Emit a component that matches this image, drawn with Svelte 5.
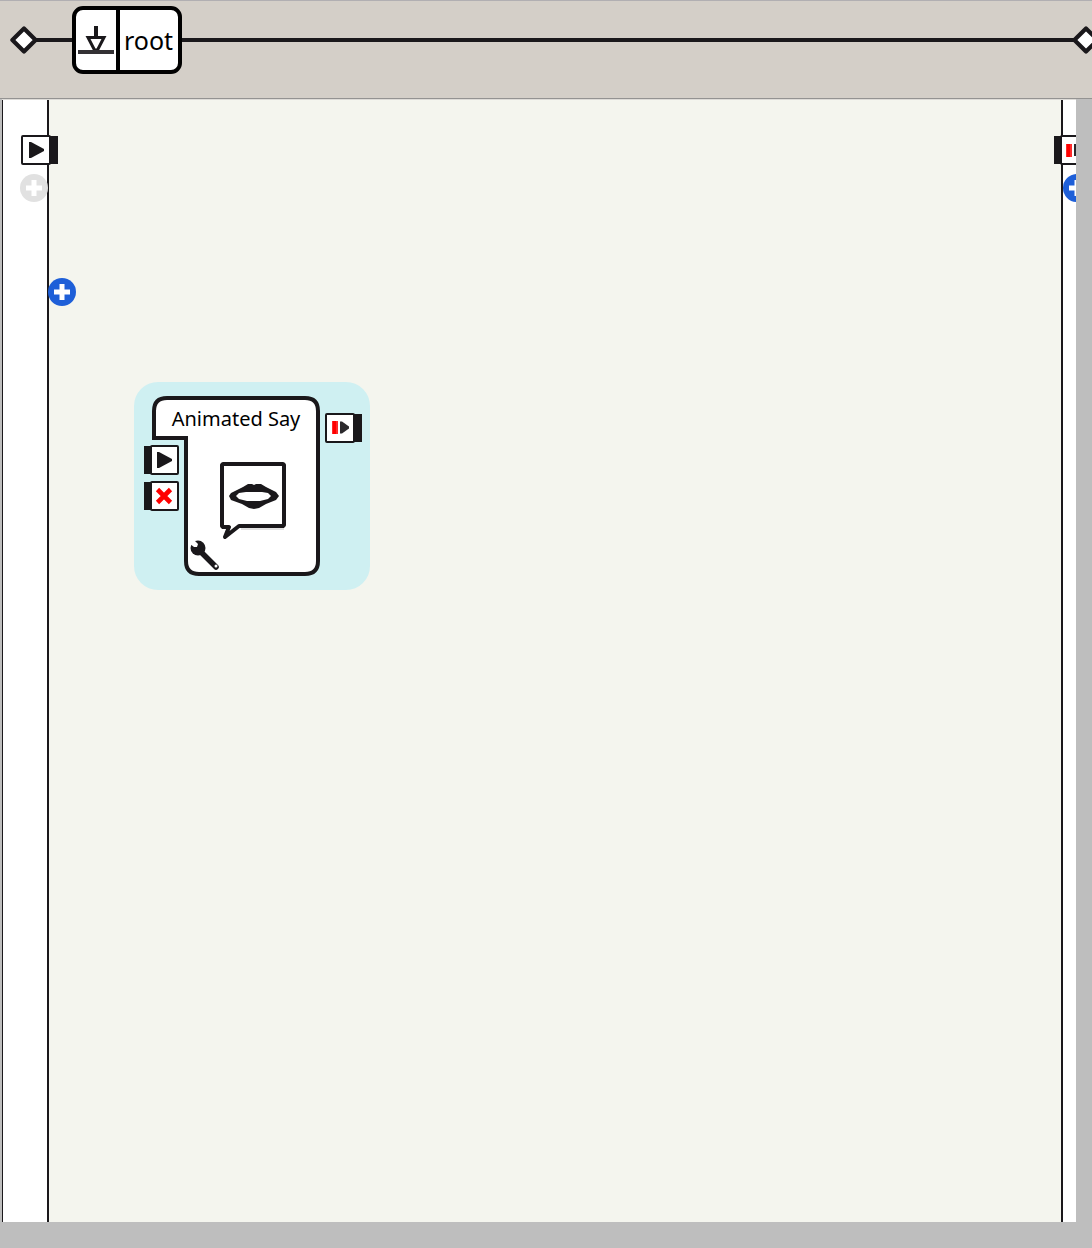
<script lang="ts">
  // Flow diagram editor: breadcrumb path on top, box canvas below.

  let path = $state(['root']);
  let nodes = $state([{ name: 'Animated Say', x: 85, y: 282 }]);
</script>

{#snippet diamond()}
  <svg class="diamond" width="28" height="28" viewBox="0 0 28 28" aria-hidden="true">
    <path d="M14 2.4 25.6 14 14 25.6 2.4 14z" fill="#fff" stroke="#1a181b" stroke-width="4.2" stroke-linejoin="round" />
  </svg>
{/snippet}

{#snippet port(kind: string, side: string, label: string)}
  <button type="button" class="port" aria-label={label}>
    {#if side === 'right'}
      <svg width="37" height="30" viewBox="0 0 37 30" aria-hidden="true">
        <rect x="1" y="1" width="28" height="28" rx="1" fill="#fff" stroke="#1a181b" stroke-width="2" />
        <rect x="28" y="1" width="9" height="28" fill="#1a181b" />
        {#if kind === 'play'}
          <path d="M8 7h2l13 7v2L10 23H8z" fill="#1a181b" />
        {:else}
          <path d="M7 8h6v13H7z" fill="#ff2a2a" />
          <path d="M9.5 8v13" stroke="#f00" stroke-width="3" />
          <path d="M15 8.500h2l7 5v2l-7 5h-2z" fill="#2b292c" />
        {/if}
      </svg>
    {:else}
      <svg width="35" height="30" viewBox="0 0 35 30" aria-hidden="true">
        <rect x="7" y="1" width="27" height="28" rx="1" fill="#fff" stroke="#1a181b" stroke-width="2" />
        <rect x="0" y="1" width="8" height="28" fill="#1a181b" />
        {#if kind === 'play'}
          <path d="M13 7h2l13 7v2l-13 7h-2z" fill="#1a181b" />
        {:else if kind === 'stop'}
          <path d="m13.5 8.5 13 13m0-13-13 13" stroke="#f00" stroke-width="4.6" />
        {:else}
          <path d="M12 9h6v13h-6z" fill="#ff2a2a" />
          <path d="M14.5 9v13" stroke="#f00" stroke-width="3" />
          <path d="M20 9h2l7 5v2l-7 5h-2z" fill="#2b292c" />
        {/if}
      </svg>
    {/if}
  </button>
{/snippet}

{#snippet plus(label: string, disabled: boolean)}
  <button type="button" class="plus" {disabled} aria-label={label}>
    <svg width="28" height="28" viewBox="0 0 28 28" aria-hidden="true">
      <circle cx="14" cy="14" r="14" fill="currentColor" />
      <path d="M14 6v16M6 14h16" stroke="#fff" stroke-width="5" />
    </svg>
  </button>
{/snippet}

<div class="editor">
  <nav class="path" aria-label="Box path">
    {@render diamond()}
    {#each path as step}
      <span class="wire short"></span>
      <button type="button" class="step">
        <span class="step-icon">
          <svg width="40" height="60" viewBox="0 0 40 60" aria-hidden="true">
            <path d="M20 16v10" stroke="#1a181b" stroke-width="4" />
            <path d="M12 27.5h16L21.5 40h-3z" fill="#fff" stroke="#1a181b" stroke-width="3" />
            <path d="M2 42h36" stroke="#333134" stroke-width="4" />
          </svg>
        </span>
        <span class="step-name">{step}</span>
      </button>
    {/each}
    <span class="wire"></span>
    {@render diamond()}
  </nav>

  <main class="stage">
    <div class="rail inputs">
      {@render port('play', 'right', 'Start input')}
      {@render plus('Add input', true)}
    </div>

    <div class="canvas">
      <div class="canvas-add">
        {@render plus('Add memory input', false)}
      </div>

      {#each nodes as node}
        <section class="node" style="left: {node.x}px; top: {node.y}px" aria-label={node.name}>
          <div class="node-in">
            {@render port('play', 'left', 'Start')}
            {@render port('stop', 'left', 'Stop')}
          </div>
          <div class="box">
            <svg width="168" height="180" viewBox="0 0 168 180" aria-hidden="true">
              <path
                d="M15 2H153Q166 2 166 15V165Q166 178 153 178H47Q34 178 34 165V42H2V15Q2 2 15 2z"
                fill="#fff"
                stroke="#1a181b"
                stroke-width="4"
              />
              <!-- speech bubble -->
              <path
                d="M71 68H131L132 69V129L131 130H87L73 141 77 131H71L70 130V69z"
                fill="#fff"
                stroke="#1a181b"
                stroke-width="4"
                stroke-linejoin="round"
              />
              <path d="M89 133H132" stroke="#c4c4c4" stroke-width="1" />
              <!-- mouth -->
              <path
                d="M77 100 79 97 91 91 96 88H100L102 89 104 88H109L114 91 124 96 127 100 124 104 114 108 107 112 102 113 97 112 90 108 79 104z"
                fill="#1a181b"
              />
              <path d="M84 100 87 97 94 96H110L116 97 119 100 116 103 108 105H95L87 103z" fill="#fff" />
            </svg>
            <h2>{node.name}</h2>
            <button type="button" class="wrench" aria-label="Set parameters">
              <svg width="32" height="32" viewBox="0 0 32 32" aria-hidden="true">
                <path d="M11 12 27 28" stroke="#1a181b" stroke-width="5.5" stroke-linecap="round" />
                <circle cx="9" cy="9" r="7.5" fill="#1a181b" />
                <path d="M2 2 5 1 9 5 8 8 5 8 1 5z" fill="#fff" />
                <circle cx="27" cy="27" r="1.5" fill="#fff" />
              </svg>
            </button>
          </div>
          <div class="node-out">
            {@render port('both', 'right', 'Stopped')}
          </div>
        </section>
      {/each}
    </div>

    <div class="rail outputs">
      {@render port('both', 'left', 'Stopped output')}
      {@render plus('Add output', false)}
    </div>
  </main>
</div>

<style>
  :global(body) {
    margin: 0;
  }

  .editor {
    --ink: #1a181b;
    display: flex;
    flex-direction: column;
    box-sizing: border-box;
    min-height: 100vh;
    padding-bottom: 26px;
    background: #bebebe;
    font-family: 'Noto Sans', 'Open Sans', sans-serif;
    color: #000;
  }

  button {
    display: block;
    padding: 0;
    border: 0;
    background: none;
    font: inherit;
    color: inherit;
    cursor: pointer;
  }

  svg {
    display: block;
    flex: none;
  }

  .path {
    display: flex;
    align-items: center;
    padding: 5px 0 24px 10px;
    border-top: 1px solid #b1afb2;
    border-bottom: 1px solid #949392;
    background: #d4cfc8;
    overflow: hidden;
  }

  .diamond {
    margin-right: -2px;
    position: relative;
  }

  .diamond:last-child {
    margin: 0 -8px 0 -2px;
  }

  .wire {
    flex: 1;
    height: 4px;
    background: var(--ink);
  }

  .wire.short {
    flex: 0 0 36px;
  }

  .step {
    display: flex;
    align-items: stretch;
    border: 4px solid #000;
    border-radius: 11px;
    background: #fff;
  }

  .step-icon {
    border-right: 4px solid #000;
  }

  .step-name {
    padding: 0 5px 0 4px;
    font-size: 25px;
    line-height: 60px;
  }

  .stage {
    flex: 1;
    display: flex;
    margin: 0 16px 0 2px;
    border-top: 1px solid #dedcd8;
    overflow: hidden;
  }

  /* Ports hang over the rail edge onto the canvas. */
  .rail {
    display: flex;
    flex-direction: column;
    gap: 9px;
    box-sizing: border-box;
    min-width: 0;
    padding-top: 35px;
    background: #fff;
    position: relative;
    z-index: 1;
  }

  .inputs {
    flex: 0 0 47px;
    padding-left: 17px;
    border-left: 1px solid var(--ink);
    border-right: 2px solid var(--ink);
  }

  .outputs {
    flex: 0 0 15px;
    border-left: 2px solid var(--ink);
  }

  .inputs .port {
    margin-left: 1px;
  }

  .outputs .port {
    margin-left: -9px;
  }

  .port,
  .plus {
    align-self: flex-start;
  }

  .plus {
    color: #1e5fd8;
  }

  .plus:disabled {
    color: #e1e1e1;
    cursor: default;
  }

  .canvas {
    flex: 1;
    position: relative;
    min-height: 520px;
    background: #f4f5ee;
  }

  .canvas-add {
    position: absolute;
    left: -1px;
    top: 178px;
    z-index: 2;
  }

  .node {
    position: absolute;
    display: grid;
    grid-template-columns: 8px 168px 42px;
    padding: 14px 8px 14px 10px;
    border-radius: 24px;
    background: #cff0f2;
  }

  .node-in {
    grid-area: 1 / 1 / 2 / 3;
    display: flex;
    flex-direction: column;
    align-self: start;
    justify-self: start;
    gap: 6px;
    padding-top: 49px;
    z-index: 1;
  }

  .box {
    grid-area: 1 / 2 / 2 / 3;
    display: grid;
  }

  .box > * {
    grid-area: 1 / 1;
  }

  .box h2 {
    margin: 9px 0 0;
    font-size: 20px;
    font-weight: 400;
    line-height: 28px;
    text-align: center;
    white-space: nowrap;
  }

  .wrench {
    align-self: end;
    justify-self: start;
    margin: 0 0 5px 37px;
  }

  .node-out {
    grid-column: 3;
    padding: 17px 0 0 5px;
  }
</style>
